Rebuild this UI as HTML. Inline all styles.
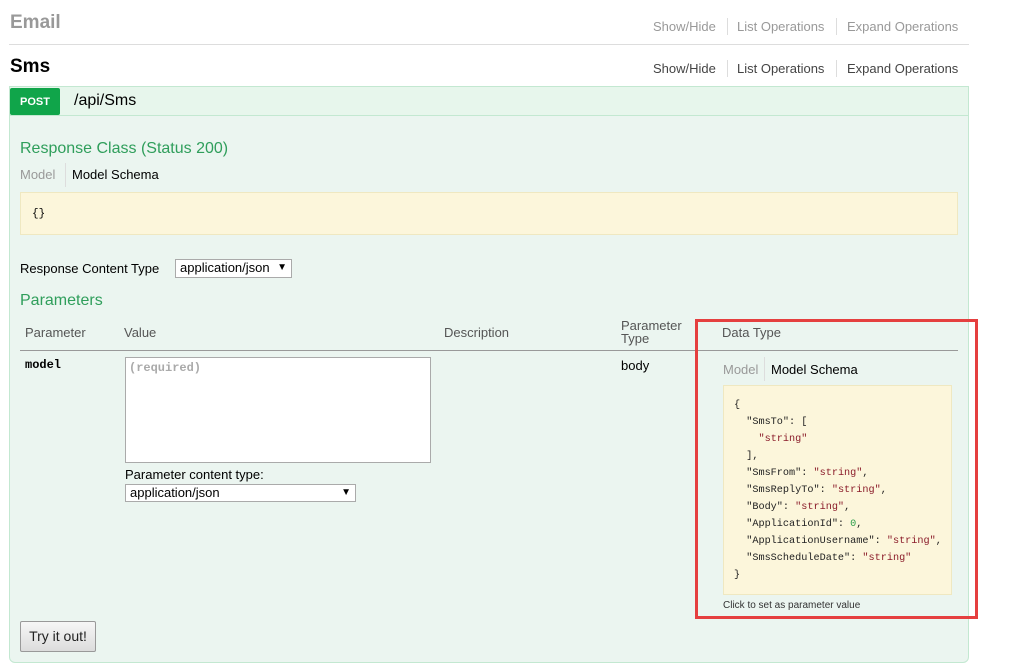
<!DOCTYPE html>
<html><head><meta charset="utf-8"><style>
*{margin:0;padding:0;box-sizing:border-box}
body{width:1017px;height:667px;background:#fff;position:relative;overflow:hidden;font-family:"Liberation Sans",sans-serif;font-size:13px;color:#000}
.a{position:absolute;white-space:nowrap}
.mono{font-family:"Liberation Mono",monospace}
.lnk{color:#999;font-size:13px}
.lnk2{color:#444;font-size:13px}
.sep{position:absolute;width:1px;background:#ddd}
.g{color:#2f9e5b;font-size:16px}
.sel{position:absolute;background:#fff;border:1px solid #aaa;font-size:13px;padding-left:4px;line-height:16px}
.sel:after{content:"▼";position:absolute;right:4px;top:0;font-size:10px}
.code div{height:17px;line-height:17px}
.s{color:#8b1c2a}
</style></head><body>
<div class="a" style="left:10px;top:12px;font-size:19px;font-weight:bold;color:#999">Email</div>
<div class="a lnk" style="left:653px;top:19px">Show/Hide</div>
<div class="sep" style="left:727px;top:18px;height:17px"></div>
<div class="a lnk" style="left:737px;top:19px">List Operations</div>
<div class="sep" style="left:836px;top:18px;height:17px"></div>
<div class="a lnk" style="left:847px;top:19px">Expand Operations</div>
<div class="a" style="left:9px;top:44px;width:960px;height:1px;background:#ddd"></div>

<div class="a" style="left:10px;top:56px;font-size:19px;font-weight:bold;color:#000">Sms</div>
<div class="a lnk2" style="left:653px;top:61px">Show/Hide</div>
<div class="sep" style="left:727px;top:60px;height:17px"></div>
<div class="a lnk2" style="left:737px;top:61px">List Operations</div>
<div class="sep" style="left:836px;top:60px;height:17px"></div>
<div class="a lnk2" style="left:847px;top:61px">Expand Operations</div>

<div class="a" style="left:9px;top:86px;width:960px;height:577px;background:#ebf5f0;border:1px solid #c3e8d1;border-radius:0 0 6px 6px"></div>
<div class="a" style="left:9px;top:86px;width:960px;height:30px;background:#e7f6ec;border:1px solid #c3e8d1"></div>
<div class="a" style="left:10px;top:88px;width:50px;height:27px;background:#10a54a;border-radius:2px;color:#fff;font-size:11px;font-weight:bold;text-align:center;line-height:28px">POST</div>
<div class="a" style="left:74px;top:92px;font-size:16px;color:#000">/api/Sms</div>

<div class="a g" style="left:20px;top:140px">Response Class (Status 200)</div>
<div class="a" style="left:20px;top:167px;color:#999">Model</div>
<div class="sep" style="left:65px;top:163px;height:24px"></div>
<div class="a" style="left:72px;top:167px">Model Schema</div>
<div class="a" style="left:20px;top:192px;width:938px;height:43px;background:#fcf6db;border:1px solid #efe8c1"></div>
<div class="a mono" style="left:32px;top:208px;font-size:11px">{}</div>

<div class="a" style="left:20px;top:261px">Response Content Type</div>
<div class="sel" style="left:175px;top:259px;width:117px;height:19px">application/json</div>

<div class="a g" style="left:20px;top:292px">Parameters</div>
<div class="a" style="left:25px;top:325px;color:#555">Parameter</div>
<div class="a" style="left:124px;top:325px;color:#555">Value</div>
<div class="a" style="left:444px;top:325px;color:#555">Description</div>
<div class="a" style="left:621px;top:319px;color:#555;line-height:13px">Parameter<br>Type</div>
<div class="a" style="left:722px;top:325px;color:#555">Data Type</div>
<div class="a" style="left:20px;top:350px;width:938px;height:1px;background:#999"></div>

<div class="a mono" style="left:25px;top:358px;font-weight:bold;font-size:12px">model</div>
<div class="a" style="left:125px;top:357px;width:306px;height:106px;background:#fff;border:1px solid #aaa"></div>
<div class="a mono" style="left:129px;top:361px;color:#aaa;font-size:12px;font-weight:bold">(required)</div>
<div class="a" style="left:125px;top:467px">Parameter content type:</div>
<div class="sel" style="left:125px;top:484px;width:231px;height:18px">application/json</div>
<div class="a" style="left:621px;top:358px">body</div>

<div class="a" style="left:723px;top:362px;color:#999">Model</div>
<div class="sep" style="left:764px;top:357px;height:24px"></div>
<div class="a" style="left:771px;top:362px">Model Schema</div>
<div class="a" style="left:723px;top:385px;width:229px;height:210px;background:#fcf6db;border:1px solid #efe8c1"></div>
<div class="a mono code" style="left:734px;top:397px;font-size:10.2px;color:#222">
<div>{</div>
<div>&nbsp;&nbsp;"SmsTo": [</div>
<div>&nbsp;&nbsp;&nbsp;&nbsp;<span class="s">"string"</span></div>
<div>&nbsp;&nbsp;],</div>
<div>&nbsp;&nbsp;"SmsFrom": <span class="s">"string"</span>,</div>
<div>&nbsp;&nbsp;"SmsReplyTo": <span class="s">"string"</span>,</div>
<div>&nbsp;&nbsp;"Body": <span class="s">"string"</span>,</div>
<div>&nbsp;&nbsp;"ApplicationId": <span style="color:#2a9e4a">0</span>,</div>
<div>&nbsp;&nbsp;"ApplicationUsername": <span class="s">"string"</span>,</div>
<div>&nbsp;&nbsp;"SmsScheduleDate": <span class="s">"string"</span></div>
<div>}</div>
</div>
<div class="a" style="left:723px;top:600px;font-size:10px;color:#333">Click to set as parameter value</div>
<div class="a" style="left:695px;top:319px;width:283px;height:300px;border:3px solid #e53f3f"></div>

<div class="a" style="left:20px;top:621px;width:76px;height:31px;border:1px solid #999;border-radius:2px;background:linear-gradient(#f6f6f6,#dcdcdc);text-align:center;line-height:29px;font-size:14px;color:#222">Try it out!</div>
</body></html>
